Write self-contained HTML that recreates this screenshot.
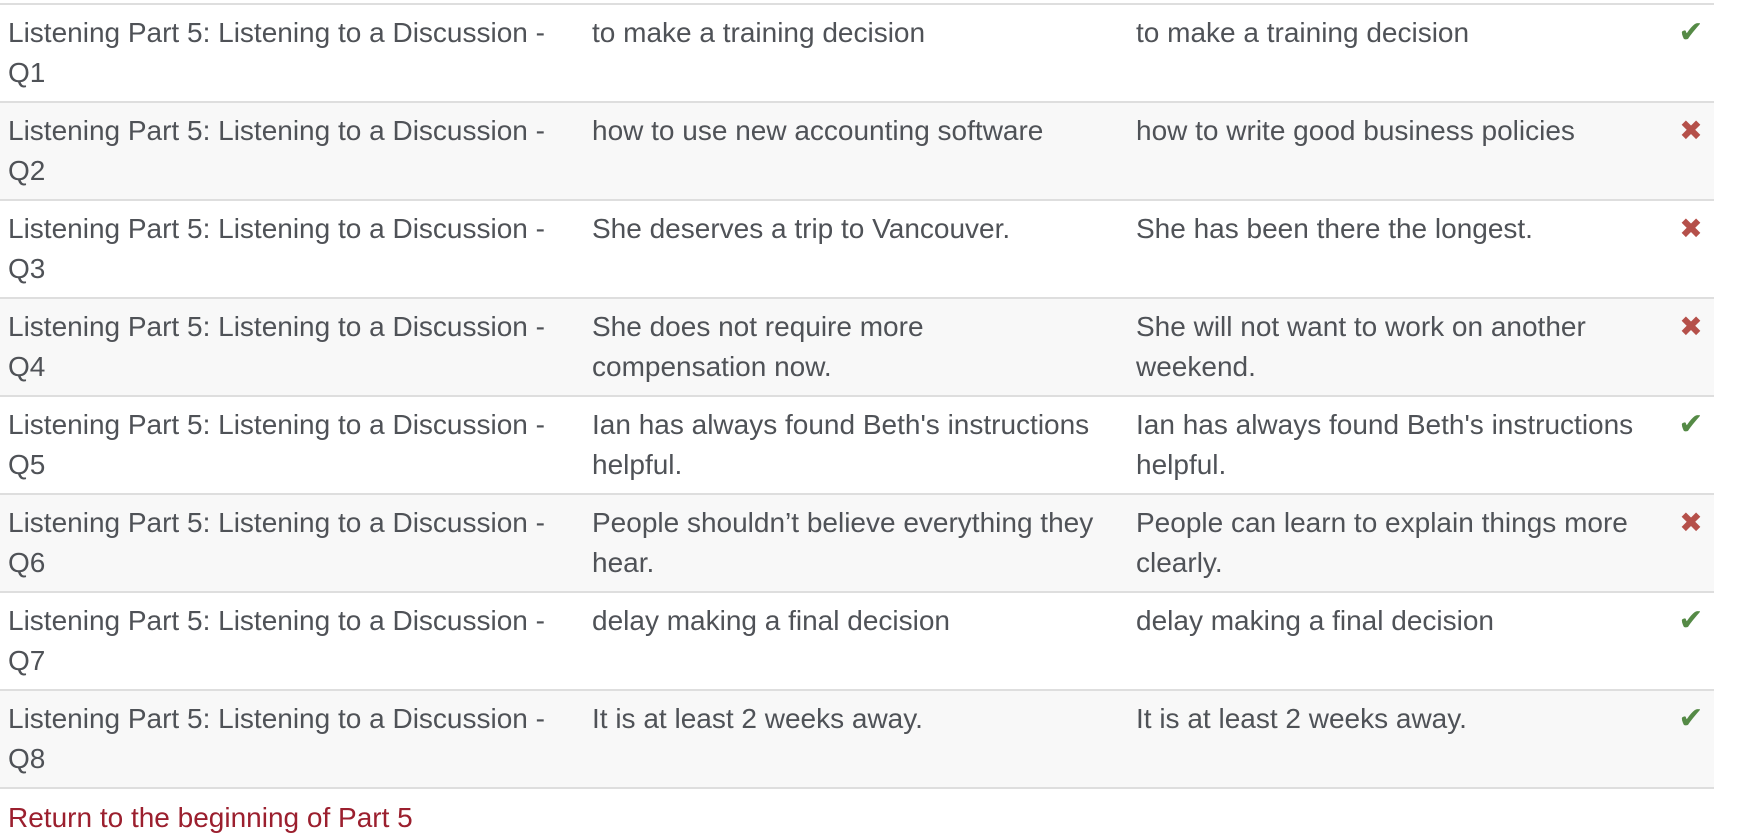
<!DOCTYPE html>
<html><head><meta charset="utf-8"><style>
html,body{margin:0;padding:0;background:#fff;width:1746px;height:836px;overflow:hidden}
body{font-family:"Liberation Sans",sans-serif;font-size:28px;color:#4f5257}
table{border-collapse:collapse;width:1714px;position:absolute;top:3px;left:0;table-layout:fixed}
td{border-top:2px solid #dedede;padding:8px 8px 8px 8px;line-height:40px;vertical-align:top;white-space:nowrap;height:80px;overflow:visible}
tr:nth-child(even) td{background:#f8f8f8}
tr:last-child td{border-bottom:2px solid #dedede}
.c1{width:568px}.c2{width:528px}.c3{width:524px}
.ic{text-align:center;padding-left:0;padding-right:0}
.ok{color:#558a46;font-size:30px}.no{color:#b5504a;font-size:28px}
a{position:absolute;left:8px;top:798px;color:#9b1f2e;text-decoration:none;line-height:40px}
</style></head><body>
<table>
<tr><td class="c1">Listening Part 5: Listening to a Discussion -<br>Q1</td><td class="c2">to make a training decision</td><td class="c3">to make a training decision</td><td class="ic ok">✔</td></tr>
<tr><td>Listening Part 5: Listening to a Discussion -<br>Q2</td><td>how to use new accounting software</td><td>how to write good business policies</td><td class="ic no">✖</td></tr>
<tr><td>Listening Part 5: Listening to a Discussion -<br>Q3</td><td>She deserves a trip to Vancouver.</td><td>She has been there the longest.</td><td class="ic no">✖</td></tr>
<tr><td>Listening Part 5: Listening to a Discussion -<br>Q4</td><td>She does not require more<br>compensation now.</td><td>She will not want to work on another<br>weekend.</td><td class="ic no">✖</td></tr>
<tr><td>Listening Part 5: Listening to a Discussion -<br>Q5</td><td>Ian has always found Beth's instructions<br>helpful.</td><td>Ian has always found Beth's instructions<br>helpful.</td><td class="ic ok">✔</td></tr>
<tr><td>Listening Part 5: Listening to a Discussion -<br>Q6</td><td>People shouldn’t believe everything they<br>hear.</td><td>People can learn to explain things more<br>clearly.</td><td class="ic no">✖</td></tr>
<tr><td>Listening Part 5: Listening to a Discussion -<br>Q7</td><td>delay making a final decision</td><td>delay making a final decision</td><td class="ic ok">✔</td></tr>
<tr><td>Listening Part 5: Listening to a Discussion -<br>Q8</td><td>It is at least 2 weeks away.</td><td>It is at least 2 weeks away.</td><td class="ic ok">✔</td></tr>
</table>
<a href="#">Return to the beginning of Part 5</a>
</body></html>
